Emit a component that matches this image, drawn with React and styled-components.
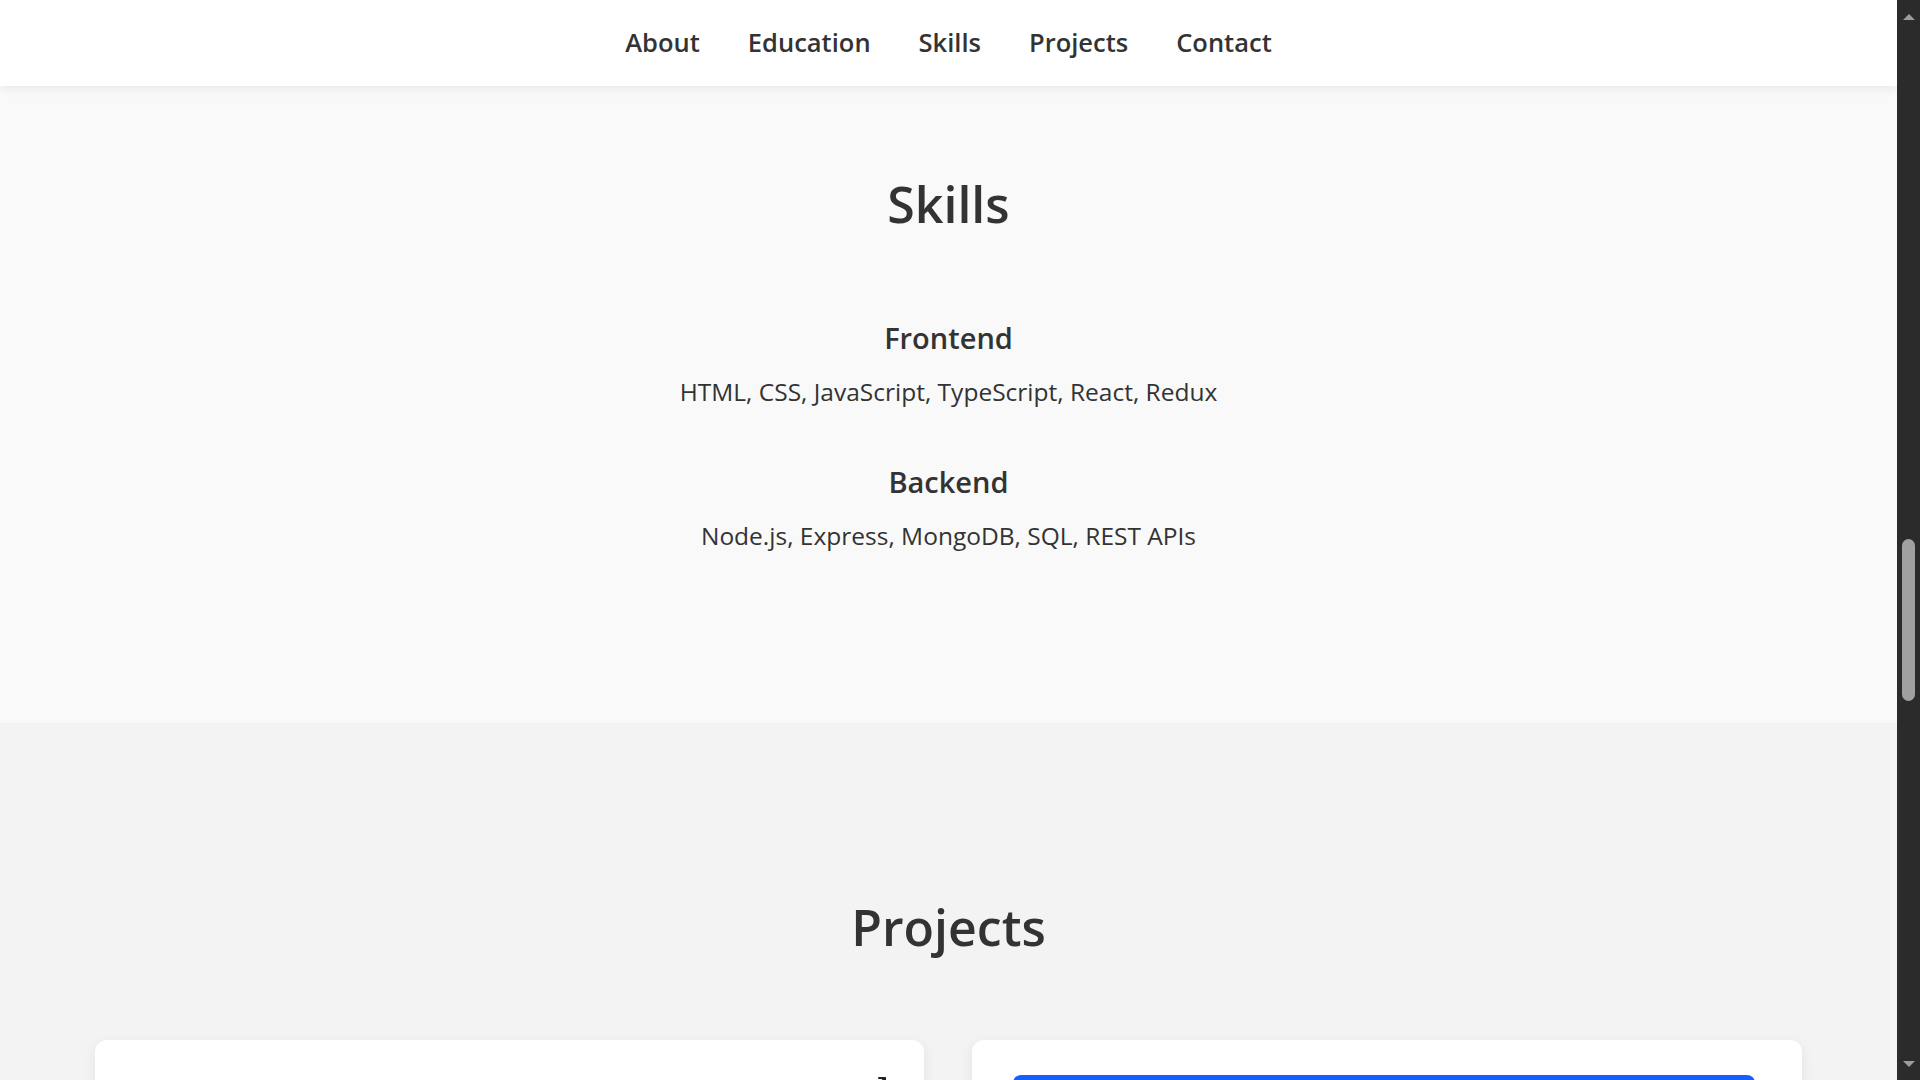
import React from "react";
import styled, {createGlobalStyle} from "styled-components";
import {ExternalLink} from "lucide-react";

const GlobalStyle = createGlobalStyle`
  html, body {
    margin: 0;
    padding: 0;
    height: 100%;
    overflow: hidden;
  }
  body {
    font-family: "Open Sans", "Liberation Sans", sans-serif;
    color: #333;
  }
  * { box-sizing: border-box; }
`

const Frame = styled.div`
  display: flex;
  height: 100vh;
  width: 100vw;
`

const Page = styled.div`
  flex: 1;
  display: flex;
  flex-direction: column;
  overflow: hidden;
  background: #f3f3f3;
`

const NavBar = styled.nav`
  position: relative;
  z-index: 2;
  height: 86px;
  flex-shrink: 0;
  background: #fff;
  box-shadow: 0 2px 10px rgba(0, 0, 0, 0.08);
  display: flex;
  align-items: center;
  justify-content: center;
  gap: 48px;
  padding-bottom: 2px;
`

const NavLink = styled.a`
  font-size: 25.5px;
  font-weight: 600;
  color: #333;
  text-decoration: none;
  cursor: pointer;
`

const Section = styled.section`
  flex-shrink: 0;
  background: ${props => props.bg};
  padding: ${props => props.pad};
  display: flex;
  flex-direction: column;
  align-items: center;
`

const Title = styled.h2`
  margin: 0 0 ${props => props.gap}px;
  font-size: 50px;
  line-height: 55px;
  font-weight: 600;
  color: #333;
`

const SkillGroup = styled.div`
  text-align: center;
  margin-bottom: ${props => props.last ? 0 : 55}px;
`

const GroupTitle = styled.h3`
  margin: 0 0 19px;
  font-size: 29px;
  line-height: 34px;
  font-weight: 600;
`

const SkillList = styled.p`
  margin: 0;
  font-size: 24.5px;
  line-height: 36px;
  font-weight: 400;
`

const CardGrid = styled.div`
  width: 90%;
  display: grid;
  grid-template-columns: 1fr 1fr;
  gap: 48px;
`

const Card = styled.div`
  background: #fff;
  border-radius: 12px;
  box-shadow: 0 4px 14px rgba(0, 0, 0, 0.07);
  padding: 35px 47px 0 41px;
  height: 260px;
`

const CardHead = styled.div`
  display: flex;
  justify-content: flex-end;
  margin: 0 -11px 0 0;
  color: #222;
`

const Preview = styled.div`
  height: 220px;
  border-radius: 8px;
  background: #1a5cff;
`

const Scrollbar = styled.div`
  width: 23px;
  flex-shrink: 0;
  background: #2b2b2b;
  display: flex;
  flex-direction: column;
  align-items: center;
`

const Arrow = styled.div`
  width: 0;
  height: 0;
  border-left: 6px solid transparent;
  border-right: 6px solid transparent;
  ${props => props.down
    ? "border-top: 6px solid #9c9c9c; margin-top: auto; margin-bottom: 13px;"
    : "border-bottom: 6px solid #9c9c9c; margin-top: 14px;"}
`

const Thumb = styled.div`
  width: 13px;
  height: 162px;
  margin-top: ${props => props.offset}px;
  border-radius: 7px;
  background: #a0a0a0;
`

const skills = [
  {name: "Frontend", items: "HTML, CSS, JavaScript, TypeScript, React, Redux"},
  {name: "Backend", items: "Node.js, Express, MongoDB, SQL, REST APIs"},
]

export default function App() {
  return (
    <Frame>
      <GlobalStyle/>
      <Page>
        <NavBar>
          <NavLink>About</NavLink>
          <NavLink>Education</NavLink>
          <NavLink>Skills</NavLink>
          <NavLink>Projects</NavLink>
          <NavLink>Contact</NavLink>
        </NavBar>

        <Section bg="#f9f9f9" pad="91px 0 169px">
          <Title gap={89}>Skills</Title>
          {skills.map((s, i) => (
            <SkillGroup key={s.name} last={i === skills.length - 1}>
              <GroupTitle>{s.name}</GroupTitle>
              <SkillList>{s.items}</SkillList>
            </SkillGroup>
          ))}
        </Section>

        <Section bg="#f3f3f3" pad="177px 0 0">
          <Title gap={85}>Projects</Title>
          <CardGrid>
            <Card>
              <CardHead><ExternalLink size={24} strokeWidth={2}/></CardHead>
            </Card>
            <Card>
              <Preview/>
            </Card>
          </CardGrid>
        </Section>
      </Page>
      <Scrollbar>
        <Arrow/>
        <Thumb offset={519}/>
        <Arrow down/>
      </Scrollbar>
    </Frame>
  )
}
